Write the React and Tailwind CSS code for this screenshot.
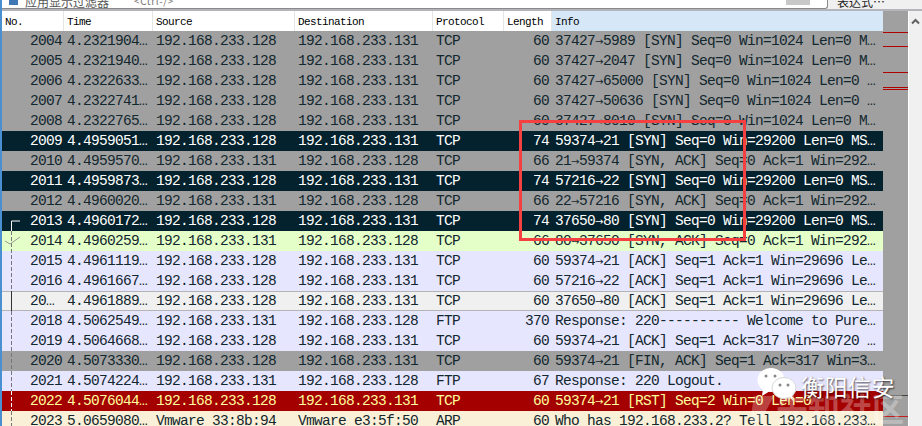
import React from 'react';

const mono = 'font-["Liberation_Mono","DejaVu_Sans_Mono",monospace]';

const SRC = '192.168.233.128';
const DST = '192.168.233.131';

const styles = {
  gray: 'bg-[#a0a0a0] text-[#12272e]',
  dark: 'bg-[#04222d] text-white',
  green: 'bg-[#e4ffc7] text-[#12272e]',
  purple: 'bg-[#e7e6ff] text-[#12272e]',
  light: 'bg-[#f0f0f0] text-[#12272e] border-y border-[#b4b4b4]',
  red: 'bg-[#a40000] text-[#fffc9c]',
  arp: 'bg-[#faf0d7] text-[#12272e]',
};

const rows = [
  ['gray', '2004', '4.2321904…', SRC, DST, 'TCP', '60', '37427→5989 [SYN] Seq=0 Win=1024 Len=0 M…'],
  ['gray', '2005', '4.2321940…', SRC, DST, 'TCP', '60', '37427→2047 [SYN] Seq=0 Win=1024 Len=0 M…'],
  ['gray', '2006', '4.2322633…', SRC, DST, 'TCP', '60', '37427→65000 [SYN] Seq=0 Win=1024 Len=0 …'],
  ['gray', '2007', '4.2322741…', SRC, DST, 'TCP', '60', '37427→50636 [SYN] Seq=0 Win=1024 Len=0 …'],
  ['gray', '2008', '4.2322765…', SRC, DST, 'TCP', '60', '37427→8010 [SYN] Seq=0 Win=1024 Len=0 M…'],
  ['dark', '2009', '4.4959051…', SRC, DST, 'TCP', '74', '59374→21 [SYN] Seq=0 Win=29200 Len=0 MS…'],
  ['gray', '2010', '4.4959570…', DST, SRC, 'TCP', '66', '21→59374 [SYN, ACK] Seq=0 Ack=1 Win=292…'],
  ['dark', '2011', '4.4959873…', SRC, DST, 'TCP', '74', '57216→22 [SYN] Seq=0 Win=29200 Len=0 MS…'],
  ['gray', '2012', '4.4960020…', DST, SRC, 'TCP', '66', '22→57216 [SYN, ACK] Seq=0 Ack=1 Win=292…'],
  ['dark', '2013', '4.4960172…', SRC, DST, 'TCP', '74', '37650→80 [SYN] Seq=0 Win=29200 Len=0 MS…'],
  ['green', '2014', '4.4960259…', DST, SRC, 'TCP', '66', '80→37650 [SYN, ACK] Seq=0 Ack=1 Win=292…'],
  ['purple', '2015', '4.4961119…', SRC, DST, 'TCP', '60', '59374→21 [ACK] Seq=1 Ack=1 Win=29696 Le…'],
  ['purple', '2016', '4.4961667…', SRC, DST, 'TCP', '60', '57216→22 [ACK] Seq=1 Ack=1 Win=29696 Le…'],
  ['light', '20… ', '4.4961889…', SRC, DST, 'TCP', '60', '37650→80 [ACK] Seq=1 Ack=1 Win=29696 Le…'],
  ['purple', '2018', '4.5062549…', DST, SRC, 'FTP', '370', 'Response: 220---------- Welcome to Pure…'],
  ['purple', '2019', '4.5064668…', SRC, DST, 'TCP', '60', '59374→21 [ACK] Seq=1 Ack=317 Win=30720 …'],
  ['gray', '2020', '4.5073330…', SRC, DST, 'TCP', '60', '59374→21 [FIN, ACK] Seq=1 Ack=317 Win=3…'],
  ['purple', '2021', '4.5074224…', DST, SRC, 'FTP', '67', 'Response: 220 Logout.'],
  ['red', '2022', '4.5076044…', SRC, DST, 'TCP', '60', '59374→21 [RST] Seq=2 Win=0 Len=0'],
  ['arp', '2023', '5.0659080…', 'Vmware 33:8b:94', 'Vmware e3:5f:50', 'ARP', '60', 'Who has 192.168.233.2? Tell 192.168.233…'],
];

const HeaderCell = ({ className, children }) => (
  <div className={`h-full flex items-center pl-[3px] pt-[1px] border-r border-[#e5e5e5] ${className}`}>{children}</div>
);

// the mono font's arrow sits too low, so it gets its own 8px slot
const Info = ({ text }) => {
  const parts = text.split('→');
  if (parts.length < 2) return text;
  return (
    <>
      {parts[0]}
      <span className="inline-block w-[8px] text-center text-[10px] tracking-normal font-['DejaVu_Sans',sans-serif]">→</span>
      {parts[1]}
    </>
  );
};

const PacketRow = ({ row }) => {
  const [kind, no, time, src, dst, proto, len, info] = row;
  return (
    <div className={`h-5 shrink-0 flex items-center whitespace-pre overflow-hidden ${styles[kind]}`}>
      <div className="w-[62px] text-right pr-[2px]">{no}</div>
      <div className="w-[89px] pl-[3px]">{time}</div>
      <div className="w-[142px] pl-[3px]">{src}</div>
      <div className="w-[138px] pl-[3px]">{dst}</div>
      <div className="w-[71px] pl-[3px]">{proto}</div>
      <div className="w-[48px] text-right pr-[3px]">{len}</div>
      <div className="flex-1 pl-[3px]"><Info text={info} /></div>
    </div>
  );
};

const App = () => {
  return (
    <div className={`relative w-[922px] h-[426px] overflow-hidden bg-white flex ${mono}`}>
      <div className="w-[2px] shrink-0 bg-[#4a90d0]" />
      <div className="flex-1 flex flex-col min-w-0">
        {/* filter bar, only its lower edge is visible */}
        <div className="h-[9px] shrink-0 flex overflow-hidden bg-[#f0f0f0] font-['Noto_Sans_CJK_SC',sans-serif]">
          <div className="w-[826px] h-[9px] shrink-0 flex bg-white border-r border-b border-[#8a8a8a] rounded-br-[3px]">
            <div className="w-[17px] h-[5px] flex justify-end shrink-0 pr-[1px]">
              <div className="w-[9px] h-[5px] bg-[#3f78b5]" />
            </div>
            <span className="text-[12px] leading-[14px] h-[14px] -mt-[5px] text-[#555] ml-[6px] shrink-0 whitespace-pre">
              应用显示过滤器
            </span>
            <span className="text-[10px] leading-[14px] h-[14px] -mt-[6px] text-[#777] ml-[25px] tracking-[0.6px] shrink-0 whitespace-pre">
              &lt;Ctrl-/&gt;
            </span>
            <div className="ml-auto mr-[17px] w-6 h-[5px] bg-[#c8c8c8]" />
          </div>
          <span className="text-[12px] leading-[14px] h-[14px] -mt-[5px] text-[#222] ml-[9px] whitespace-pre">表达式…</span>
        </div>
        <div className="h-[2px] shrink-0 bg-[#b4b4bc]" />

        <div className="flex-1 flex min-h-0">
          <div className="w-[881px] shrink-0 flex flex-col overflow-hidden text-[14.5px] tracking-[-0.7px] leading-5">
            {/* column headers */}
            <div className="h-5 shrink-0 flex items-center bg-white text-black text-[11px] tracking-[-0.6px]">
              <HeaderCell className="w-[62px]">No.</HeaderCell>
              <HeaderCell className="w-[89px]">Time</HeaderCell>
              <HeaderCell className="w-[142px]">Source</HeaderCell>
              <HeaderCell className="w-[138px]">Destination</HeaderCell>
              <HeaderCell className="w-[71px]">Protocol</HeaderCell>
              <HeaderCell className="w-[48px]">Length</HeaderCell>
              <HeaderCell className="flex-1 bg-[#d6e8f8] border-r-0">Info</HeaderCell>
            </div>
            {rows.map((r) => (
              <PacketRow key={r[1] + r[2]} row={r} />
            ))}
          </div>

          {/* packet minimap */}
          <svg className="w-[25px] shrink-0 bg-[#a0a0a0]" width="25" height="415">
            {[21, 35, 61, 76, 78].map((y) => (
              <rect key={y} x="0" y={y} width="25" height="1" fill="#b00000" />
            ))}
            <rect x="0" y="384" width="25" height="1" fill="#444" />
            <rect x="0" y="405" width="25" height="1" fill="#c02020" />
          </svg>

          {/* scrollbar */}
          <div className="flex-1 bg-[#f0f0f0] border-l border-white flex justify-center pt-[7px]">
            <svg width="9" height="7" viewBox="0 0 9 7">
              <path d="M1 5.5 L4.5 2 L8 5.5" fill="none" stroke="#606060" strokeWidth="2" />
            </svg>
          </div>
        </div>
      </div>

      {/* conversation marker */}
      <svg className="absolute left-0 top-0 pointer-events-none" width="30" height="426">
        <path d="M20 221 H11.5 V231" fill="none" stroke="#fff" strokeWidth="1" />
        <path d="M11.5 231 V291" fill="none" stroke="#777" strokeWidth="1" strokeDasharray="4 2" />
        <path d="M11.5 291 V311" fill="none" stroke="#333" strokeWidth="1" />
        <path d="M11.5 311 V391" fill="none" stroke="#777" strokeWidth="1" strokeDasharray="4 2" />
        <path d="M11.5 391 V411" fill="none" stroke="#fff" strokeWidth="1" strokeDasharray="4 2" />
        <path d="M11.5 411 V426" fill="none" stroke="#777" strokeWidth="1" strokeDasharray="4 2" />
        <path d="M5 241 L10 244 L20 237" fill="none" stroke="#999" strokeWidth="1" />
      </svg>

      {/* red annotation box */}
      <div className="absolute left-[519px] top-[120px] w-[227px] h-[121px] border-[3px] border-[#f44040]" />

      {/* watermarks */}
      <div className="absolute left-[776px] top-[388px] text-[32px] leading-[38px] font-bold text-white/30 whitespace-pre font-['Noto_Sans_CJK_SC',sans-serif]">
        先知社区
      </div>
      <svg className="absolute left-[748px] top-[392px]" width="28" height="32" viewBox="0 0 28 32">
        <path d="M6 4 H26 L12 30 H2 Z" fill="#fff" fillOpacity="0.25" />
      </svg>
      <svg className="absolute left-[757px] top-[366px]" width="42" height="36" viewBox="0 0 42 36">
        <ellipse cx="14" cy="14" rx="13.5" ry="12" fill="#fff" />
        <path d="M6 22 L5 30 L13 25 Z" fill="#fff" />
        <ellipse cx="27" cy="22" rx="12" ry="10.5" fill="#fff" stroke="#d8d8d8" strokeWidth="1" />
        <path d="M32 30 L36 35 L35 28 Z" fill="#fff" />
        <circle cx="9" cy="10" r="1.5" fill="#888" />
        <circle cx="18" cy="10" r="1.5" fill="#888" />
        <circle cx="23" cy="19" r="1.5" fill="#888" />
        <circle cx="31" cy="19" r="1.5" fill="#888" />
      </svg>
      <div className="absolute left-[801px] top-[371px] text-[23px] leading-[30px] tracking-[0.5px] text-white whitespace-pre [text-shadow:1px_1px_2px_rgba(0,0,0,0.7)] font-['Noto_Sans_CJK_SC',sans-serif]">
        衡阳信安
      </div>
    </div>
  );
};

export default App;
